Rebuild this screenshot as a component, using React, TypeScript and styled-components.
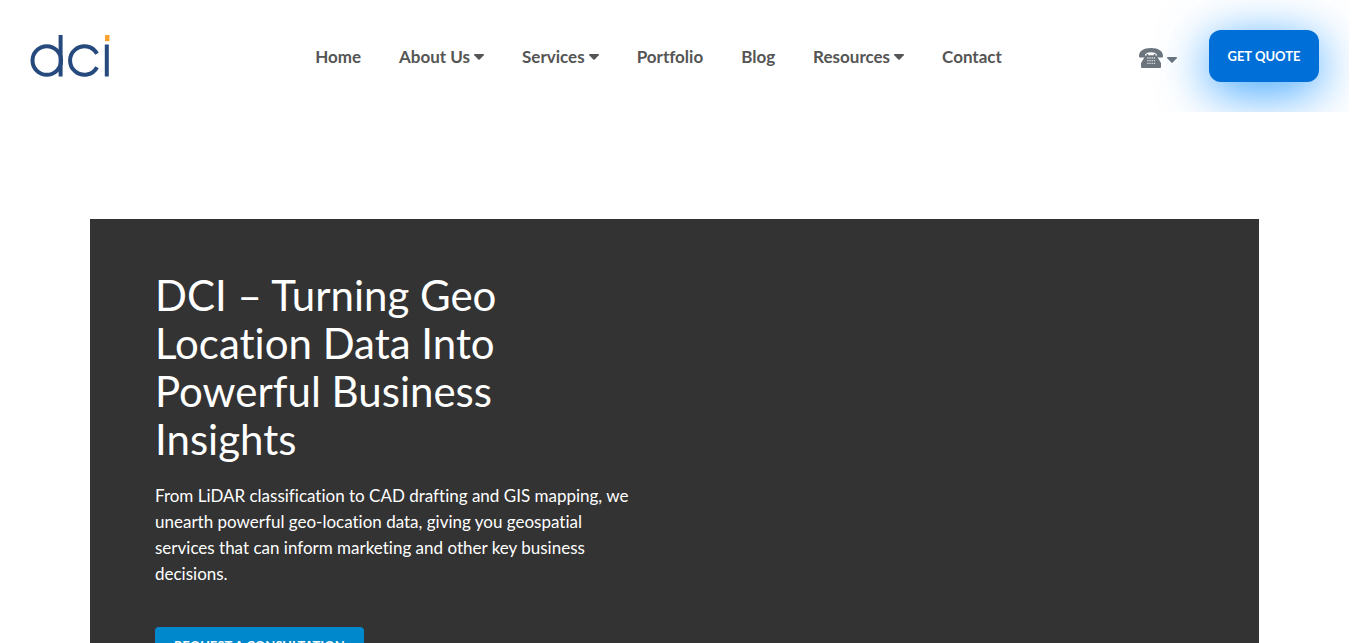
import React from "react";
import styled, { createGlobalStyle } from "styled-components";

const GlobalStyle = createGlobalStyle`
  *, *::before, *::after { box-sizing: border-box; }
  html { scrollbar-width: none; }
  body {
    margin: 0;
    padding-right: 17px;
    background: #fff;
    font-family: Lato, "Open Sans", sans-serif;
    font-size: 17px;
    font-variant-ligatures: none;
  }
`;

const Header = styled.header`
  display: grid;
  grid-template-columns: 205px 1fr 205px;
  align-items: center;
  height: 112px;
  padding: 0 30px;
  overflow: hidden;
`;

const LogoLink = styled.a`
  display: block;
  width: 80px;
  height: 44px;
  svg { display: block; }
`;

const Nav = styled.nav`
  display: flex;
  justify-content: center;
  gap: 38px;
  padding: 2px 32px 0 0;
`;

const NavLink = styled.a`
  display: inline-flex;
  align-items: center;
  gap: 4px;
  color: #555;
  font-weight: 700;
  line-height: 24px;
  white-space: nowrap;
  text-decoration: none;
`;

const Actions = styled.div`
  display: flex;
  align-items: center;
  justify-content: flex-end;
  gap: 32px;
`;

const PhoneButton = styled.button`
  display: flex;
  align-items: center;
  gap: 4px;
  padding: 4px 0 0;
  border: 0;
  background: none;
  color: #6c757d;
  svg + svg { margin-top: 4px; }
`;

const QuoteLink = styled.a`
  display: flex;
  align-items: center;
  justify-content: center;
  width: 110px;
  height: 52px;
  border-radius: 12px;
  background: #0070d8;
  box-shadow: 0 10px 50px rgba(0, 136, 255, 0.8);
  color: #fff;
  font-size: 13px;
  font-weight: 700;
  text-decoration: none;
  white-space: nowrap;
`;

const Hero = styled.section`
  margin: 107px 90px 0;
  padding: 52px 65px 65px;
  background: #333;
  color: #fff;
`;

const Title = styled.h1`
  max-width: 390px;
  margin: 0 0 20px;
  font-size: 42px;
  font-weight: 400;
  line-height: 48px;
`;

const Lead = styled.p`
  max-width: 484px;
  margin: 0 0 40px;
  line-height: 26px;
`;

const ConsultLink = styled.a`
  display: inline-block;
  padding: 7px 19px;
  border-radius: 4px;
  background: #08c;
  color: #fff;
  font-size: 13px;
  font-weight: 700;
  line-height: 24px;
  text-decoration: none;
`;

const Caret = () => (
  <svg width="10" height="6" viewBox="0 0 10 6" aria-hidden="true">
    <path d="M.6 0h8.800q.9.400.3 1.200L5.700 5.500q-.7.500-1.400 0L.300 1.200Q-.300.400.600 0Z" fill="currentColor" />
  </svg>
);

const Logo = () => (
  <svg width="80" height="44" viewBox="0 0 80 44" aria-hidden="true">
    <g fill="none" stroke="#264a7d" strokeWidth="4">
      <circle cx="16.800" cy="26.500" r="14.300" />
      <path d="M30.600 1v41.500M76.800 10.500v32" />
      <path d="M67 19.800a14.300 14.300 0 1 0 0 13.400" />
    </g>
    <path d="M75 1h4.500v6.200H75z" fill="#fba22f" />
  </svg>
);

const Phone = () => (
  <svg width="24" height="20" viewBox="0 0 24 20" aria-hidden="true">
    <g fill="currentColor">
      <path d="M0 8C0 3 4.500 0 12 0s12 3 12 8c0 1.200-.4 1.600-1.300 1.600h-3.400c-1 0-1.500-.5-1.500-1.400V6.300C16.500 5 15 4.300 12 4.300S7.500 5 6.200 6.300v1.900c0 .9-.5 1.400-1.500 1.400H1.300C.4 9.600 0 9.200 0 8Z" />
      <path d="M7.600 6h1.600v1.200h5.600V6h1.600v1.500h1L22 15v4q0 1-1 1H3q-1 0-1-1v-4l4.600-7.500h1Z" />
    </g>
    <path
      d="M8.200 10h8M8.200 12.700h8M8.200 15.400h8"
      stroke="#fff"
      strokeWidth="1.300"
      strokeDasharray="1.300 .9"
      opacity=".75"
    />
  </svg>
);

const links = [
  { label: "Home" },
  { label: "About Us", menu: true },
  { label: "Services", menu: true },
  { label: "Portfolio" },
  { label: "Blog" },
  { label: "Resources", menu: true },
  { label: "Contact" },
];

export default function App() {
  return (
    <>
      <GlobalStyle />
      <Header>
        <LogoLink href="#" aria-label="DCI home"><Logo /></LogoLink>
        <Nav aria-label="Main">
          {links.map(({ label, menu }) => (
            <NavLink href="#" key={label}>{label}{menu && <Caret />}</NavLink>
          ))}
        </Nav>
        <Actions>
          <PhoneButton type="button" aria-label="Phone numbers"><Phone /><Caret /></PhoneButton>
          <QuoteLink href="#">GET QUOTE</QuoteLink>
        </Actions>
      </Header>
      <main>
        <Hero>
          <Title>DCI – Turning Geo Location Data Into Powerful Business Insights</Title>
          <Lead>
            From LiDAR classification to CAD drafting and GIS mapping, we unearth powerful geo-location
            data, giving you geospatial services that can inform marketing and other key business decisions.
          </Lead>
          <ConsultLink href="#">REQUEST A CONSULTATION</ConsultLink>
        </Hero>
      </main>
    </>
  );
}
